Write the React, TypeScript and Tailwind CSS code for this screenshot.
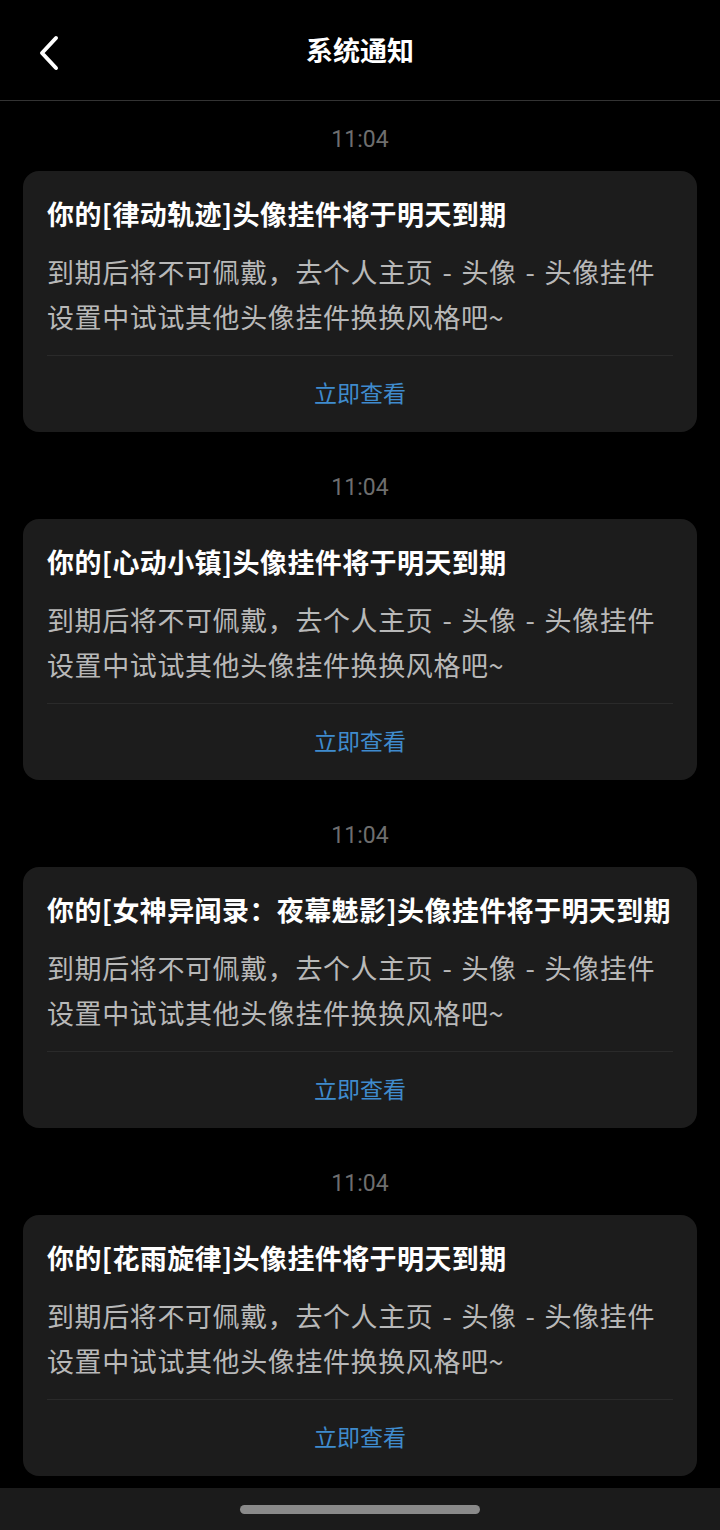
const notices = [
  { time: '11:04', name: '律动轨迹' },
  { time: '11:04', name: '心动小镇' },
  { time: '11:04', name: '女神异闻录：夜幕魅影' },
  { time: '11:04', name: '花雨旋律' },
];

function Dash() {
  return <span className="px-[9px]">-</span>;
}

function NoticeCard({ name }: { name: string }) {
  return (
    <div className="mx-[23px] rounded-[16px] bg-[#1c1c1c] px-[24px] pt-[25px]">
      <h2 className="text-[27px] leading-[36px] font-bold text-white whitespace-nowrap tracking-[0.4px]">
        你的[{name}]头像挂件将于明天到期
      </h2>
      <p className="mt-[17px] text-[27px] leading-[45px] text-[#b8b8b8] tracking-[0.6px] whitespace-nowrap">
        到期后将不可佩戴，去个人主页<Dash />头像<Dash />头像挂件
        <br />
        设置中试试其他头像挂件换换风格吧~
      </p>
      <div className="mt-[16px] border-t border-[#2a2a2a]" />
      <button className="flex h-[76px] w-full items-center justify-center pb-[4px] text-[23px] text-[#3f8bcd]">
        立即查看
      </button>
    </div>
  );
}

export default function App() {
  return (
    <div
      className="flex h-[1530px] w-[720px] flex-col bg-black"
      style={{ fontFamily: '"Noto Sans CJK SC", "Noto Sans", sans-serif' }}
    >
      {/* top bar */}
      <header className="relative flex h-[101px] shrink-0 items-center justify-center border-b border-[#333]">
        <svg
          className="absolute left-[36px] top-[35px]"
          width="26"
          height="36"
          viewBox="0 0 26 36"
          fill="none"
          stroke="white"
          strokeWidth="4"
          strokeLinecap="round"
          strokeLinejoin="round"
        >
          <path d="M20 3 L6 18 L20 33" />
        </svg>
        <h1 className="text-[27px] font-bold text-white">系统通知</h1>
      </header>

      <main className="flex-1 overflow-hidden">
        {notices.map((n, i) => (
          <div key={i}>
            <div
              className={`flex h-[24px] items-center justify-center text-[23px] text-[#6e6e6e] ${
                i === 0 ? 'mt-[27px]' : 'mt-[44px]'
              } mb-[19px]`}
              style={{ fontFamily: 'Roboto, sans-serif' }}
            >
              {n.time}
            </div>
            <NoticeCard name={n.name} />
          </div>
        ))}
      </main>

      {/* gesture bar */}
      <div className="flex h-[42px] shrink-0 items-center justify-center bg-[#1b1b1b]">
        <div className="h-[9px] w-[240px] rounded-full bg-[#8a8a8a]" />
      </div>
    </div>
  );
}
